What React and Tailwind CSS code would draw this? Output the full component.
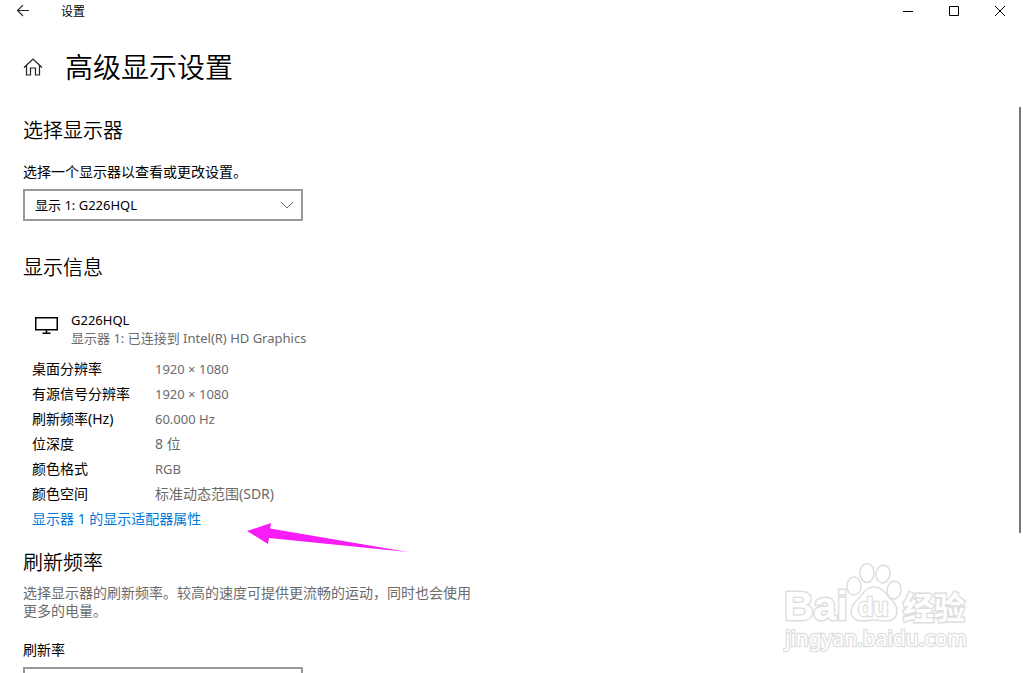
const font = "font-['Noto_Sans','Noto_Sans_CJK_SC',sans-serif]";

const details = [
  { label: "桌面分辨率", value: "1920 × 1080", size: "text-[13px]" },
  { label: "有源信号分辨率", value: "1920 × 1080", size: "text-[13px]" },
  { label: "刷新频率(Hz)", value: "60.000 Hz", size: "text-[13px]" },
  { label: "位深度", value: "8 位", size: "text-sm" },
  { label: "颜色格式", value: "RGB", size: "text-[13px]" },
  { label: "颜色空间", value: "标准动态范围(SDR)", size: "text-sm" },
];

function TitleBar() {
  return (
    <header className="flex h-[22px] shrink-0 items-center">
      <button aria-label="返回" className="flex h-full w-[46px] items-center justify-center">
        <svg width="14" height="12" viewBox="0 0 14 12" fill="none" stroke="#222" strokeWidth="1.1">
          <path d="M13 5.5H1.5M7 0L1.5 5.5 7 11" />
        </svg>
      </button>
      <span className="ml-[15px] pt-0.5 text-xs">设置</span>
      <div className="ml-auto flex h-full">
        <button aria-label="最小化" className="flex h-full w-[46px] items-center justify-center">
          <svg width="10" height="10" viewBox="0 0 10 10" shapeRendering="crispEdges">
            <path d="M0 5h10v1H0z" />
          </svg>
        </button>
        <button aria-label="最大化" className="flex h-full w-[46px] items-center justify-center">
          <svg width="10" height="10" viewBox="0 0 10 10" fill="none" stroke="#000">
            <path d="M.5 .5h9v9h-9z" />
          </svg>
        </button>
        <button aria-label="关闭" className="flex h-full w-[46px] items-center justify-center">
          <svg width="10" height="10" viewBox="0 0 10 10" fill="none" stroke="#000">
            <path d="M0 0l10 10M10 0L0 10" />
          </svg>
        </button>
      </div>
    </header>
  );
}

function SelectBox({ id, children }) {
  return (
    <div className="relative mt-[7px] w-[280px]">
      <select
        id={id}
        className="block h-8 w-full appearance-none border-2 border-[#999] bg-white pl-[10px] pr-8 pt-px text-[13px] text-black"
      >
        {children}
      </select>
      <svg
        className="pointer-events-none absolute right-[9px] top-3"
        width="14"
        height="8"
        viewBox="0 0 14 8"
        fill="none"
        stroke="#666"
      >
        <path d="M1 1l6 6 6-6" />
      </svg>
    </div>
  );
}

function Watermark() {
  return (
    <svg
      className="pointer-events-none absolute bottom-4 right-[50px]"
      width="190"
      height="98"
      viewBox="0 0 190 98"
      fill="#fff"
      stroke="#dedede"
      strokeWidth="1.5"
      aria-hidden="true"
    >
      <ellipse cx="71" cy="27" rx="7" ry="9" />
      <ellipse cx="84" cy="14" rx="7" ry="9.5" />
      <ellipse cx="100" cy="15" rx="7" ry="9" transform="rotate(10 100 15)" />
      <ellipse cx="111" cy="31" rx="7" ry="9" transform="rotate(8 111 31)" />
      <path d="M91 28c-7 0-10 5-14 10-4 4-9 8-9 14 0 7 5 10 11 10 5 0 8-1 12-1s8 1 13 1c6 0 10-4 10-10 0-6-4-10-8-14-4-5-8-10-15-10z" />
      <g fontFamily="Liberation Sans, sans-serif" fontWeight="700" paintOrder="stroke" strokeWidth="3">
        <text x="1" y="61" fontSize="41">Bai</text>
        <text x="75" y="57" fontSize="25" strokeWidth="2.5">du</text>
        <text x="120" y="60" fontSize="31" fontFamily="Noto Sans CJK SC, sans-serif">经验</text>
      </g>
      <text x="2" y="87" fontSize="21" strokeWidth="2.5" paintOrder="stroke" fontFamily="Noto Sans, sans-serif">
        jingyan.baidu.com
      </text>
    </svg>
  );
}

export default function App() {
  return (
    <div className={`relative flex h-screen flex-col overflow-hidden bg-white text-black ${font}`}>
      <TitleBar />

      <div className="flex items-start">
        <main className="min-w-0 flex-1 pl-[23px] pt-[27px]">
          <div className="flex items-center">
            <a href="#home" aria-label="主页">
              <svg width="20" height="18" viewBox="0 0 20 18" fill="none" stroke="#222" strokeWidth="1.2">
                <path d="M1 9.5L10 1l9 8.5M3.5 7.5v9.5h4v-7h5v7h4V7.5" />
              </svg>
            </a>
            <h1 className="ml-[22px] text-[28px] font-[350] leading-9">高级显示设置</h1>
          </div>

          <section>
            <h2 className="mt-8 text-xl font-[350] leading-7">选择显示器</h2>
            <label htmlFor="display" className="mt-[17px] block text-sm leading-5">
              选择一个显示器以查看或更改设置。
            </label>
            <SelectBox id="display">
              <option>显示 1: G226HQL</option>
            </SelectBox>
          </section>

          <section>
            <h2 className="mt-[33px] text-xl font-[350] leading-7">显示信息</h2>
            <div className="mt-[29px] flex pl-3">
              <svg className="mt-1.5" width="24" height="18" viewBox="0 0 24 18" fill="none" stroke="#000" strokeWidth="1.5">
                <path d="M.75 .75h21.5v12H.75zM11.5 13v3M7.5 16.25h8" />
              </svg>
              <div className="ml-3 text-[13px] leading-[18px]">
                <p>G226HQL</p>
                <p className="text-[#6b6b6b]">显示器 1: 已连接到 Intel(R) HD Graphics</p>
              </div>
            </div>

            <table className="ml-[9px] mt-[9px] border-collapse">
              <tbody>
                {details.map((d) => (
                  <tr key={d.label} className="h-[25px]">
                    <th className="w-[123px] p-0 text-left text-sm font-normal leading-5">{d.label}</th>
                    <td className={`p-0 leading-5 text-[#6b6b6b] ${d.size}`}>{d.value}</td>
                  </tr>
                ))}
              </tbody>
            </table>
            <a href="#adapter" className="ml-[9px] block w-fit text-sm leading-[25px] text-[#0078d7]">
              显示器 1 的显示适配器属性
            </a>
          </section>

          <section>
            <h2 className="mt-[18px] text-xl font-[350] leading-7">刷新频率</h2>
            <p className="mt-[7px] max-w-[456px] text-sm leading-[18px] text-[#6b6b6b]">
              选择显示器的刷新频率。较高的速度可提供更流畅的运动，同时也会使用更多的电量。
            </p>
            <label htmlFor="rate" className="mt-5 block text-sm leading-5">
              刷新率
            </label>
            <SelectBox id="rate">
              <option>60.000 Hz</option>
            </SelectBox>
          </section>
        </main>

        <div className="mr-0.5 mt-[85px] h-[426px] w-0.5 bg-[#7a7a7a]" />
      </div>

      {/* pointer to the adapter link */}
      <svg
        className="pointer-events-none absolute left-[247px] top-[522px]"
        width="162"
        height="32"
        viewBox="0 0 162 32"
        fill="#f81cf6"
        aria-hidden="true"
      >
        <path d="M0 9L24 1l-1 5.5L161 30 22 16l-1 6z" />
      </svg>

      <Watermark />
    </div>
  );
}
